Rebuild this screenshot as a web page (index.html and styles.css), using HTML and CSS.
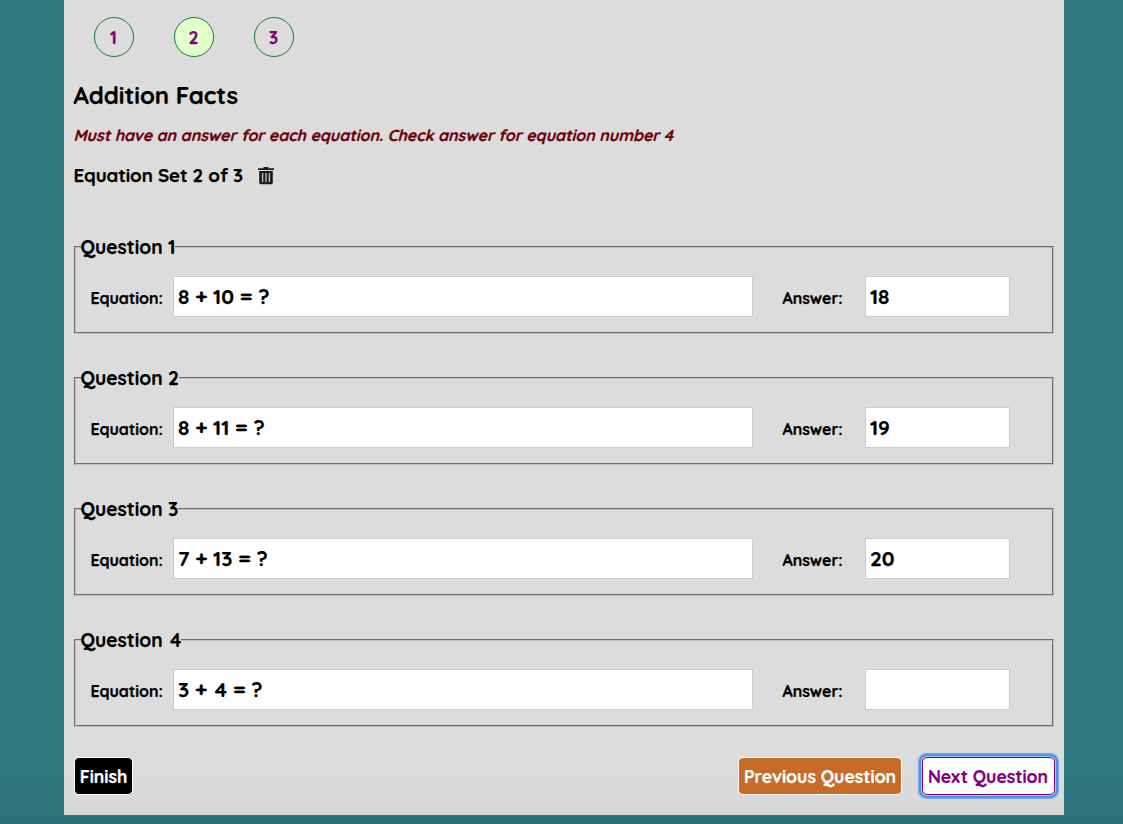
FILE: index.html
```html
<!DOCTYPE html>
<html lang="en">
<head>
<meta charset="utf-8">
<title>Addition Facts</title>
<link rel="stylesheet" href="styles.css">
</head>
<body>
<main class="panel">
  <nav class="steps">
    <span class="step">1</span>
    <span class="step current">2</span>
    <span class="step">3</span>
  </nav>
  <h1 class="title">Addition Facts</h1>
  <p class="error">Must have an answer for each equation. Check answer for equation number 4</p>
  <div class="set-row">
    <h2 class="set-title">Equation Set 2 of 3</h2>
    <svg class="trash" width="16" height="19" viewBox="0 0 16 19">
      <path d="M0 2.2h5l.8-1.2h4.4l.8 1.2h5v1.9H0z" fill="#1b1b1b"/>
      <path d="M1.2 5h13.6v11.5q0 1.7-1.7 1.7H2.9q-1.7 0-1.7-1.7z" fill="#1b1b1b"/>
      <path d="M4.6 7v9M8 7v9M11.4 7v9" stroke="#c8c8c8" stroke-width="1.3" fill="none"/>
    </svg>
  </div>
  <form class="questions">
    <fieldset class="question">
      <legend class="legend">Question 1</legend>
      <div class="fields"><label class="label">Equation:</label><div class="input equation">8 + 10 = ?</div><label class="label answer-label">Answer:</label><div class="input answer">18</div></div>
    </fieldset>
    <fieldset class="question">
      <legend class="legend">Question 2</legend>
      <div class="fields"><label class="label">Equation:</label><div class="input equation">8 + 11 = ?</div><label class="label answer-label">Answer:</label><div class="input answer">19</div></div>
    </fieldset>
    <fieldset class="question">
      <legend class="legend">Question 3</legend>
      <div class="fields"><label class="label">Equation:</label><div class="input equation">7 + 13 = ?</div><label class="label answer-label">Answer:</label><div class="input answer">20</div></div>
    </fieldset>
    <fieldset class="question">
      <legend class="legend">Question <span class="digit">4</span></legend>
      <div class="fields"><label class="label">Equation:</label><div class="input equation">3 + <span class="digit">4</span> = ?</div><label class="label answer-label">Answer:</label><div class="input answer"></div></div>
    </fieldset>
  </form>
  <div class="actions">
    <button class="button finish">Finish</button>
    <button class="button previous">Previous Question</button>
    <button class="button next">Next Question</button>
  </div>
</main>
</body>
</html>
```
FILE: styles.css
```css
* { box-sizing: border-box; }
body {
  margin: 0;
  height: 824px;
  overflow: hidden;
  background: linear-gradient(#2f7880 0, #2f7880 770px, #2c7078 824px);
  font-family: Quicksand, Lato, sans-serif;
  font-weight: 700;
  color: #000;
  -webkit-text-stroke-width: 0.25px;
}
.panel {
  width: 1000px;
  height: 815px;
  margin-left: 64px;
  padding: 17px 7px 0 10px;
  background: linear-gradient(#dcdcdc 0, #dcdcdc 770px, #d7d7d7 815px);
}
.steps { display: flex; gap: 40px; padding-left: 20px; }
.step {
  width: 40px;
  height: 40px;
  padding-right: 1px;
  border: 1px solid #128035;
  border-radius: 50%;
  line-height: 38px;
  text-align: center;
  font-size: 17.6px;
  color: #800080;
}
.current { background: #e2ffcc; }
.title { margin: 23px 0 0 -0.5px; font-size: 24px; line-height: 30px; letter-spacing: -0.04px; white-space: nowrap; }
.error {
  margin: 15px 0 0 -0.5px;
  font-style: italic;
  font-size: 16px;
  line-height: 20px;
  letter-spacing: -0.02px;
  color: #6a0008;
  white-space: nowrap;
}
.set-row { display: flex; align-items: center; height: 24px; margin-top: 18px; margin-left: -0.5px; }
.set-title { width: 184px; margin: 0; font-size: 18.72px; line-height: 24px; letter-spacing: -0.09px; white-space: nowrap; }
.questions { display: flex; flex-direction: column; gap: 31px; margin-top: 47px; }
.question {
  width: 980px;
  height: 100px;
  margin: 0;
  padding: 0 14px;
  border: 2px groove #c0c0c0;
}
.legend { height: 26px; margin-left: -9.5px; padding: 0; font-size: 19.2px; line-height: 26px; }
.digit { margin-left: 2px; }
.fields { display: flex; align-items: center; padding-top: 16px; }
.label { width: 83px; padding: 3px 0 0 0.5px; font-size: 16px; line-height: 20px; letter-spacing: -0.05px; white-space: nowrap; }
.input {
  height: 41px;
  padding-left: 4px;
  border: 1px solid #ccc;
  background: #fff;
  font-size: 20.8px;
  line-height: 39px;
}
.equation { width: 580px; }
.answer-label { margin-left: 29px; }
.answer { width: 145px; }
.actions { display: flex; align-items: center; margin-top: 30px; }
.button {
  height: 38px;
  padding: 0;
  border: 1px solid #fff;
  border-radius: 5px;
  font: inherit;
  font-size: 17.6px;
  text-align: center;
  white-space: nowrap;
  color: #fff;
}
.finish { width: 59px; background: #000; }
.previous { width: 164px; margin-left: 605px; background: #c76b29; }
.next { width: 133px; margin-left: 19.5px; background: #fff; border-color: #800080; color: #800080; box-shadow: 0 0 0 1px #a9c5ea, 0 0 0 3px #4d94e8, 0 0 1px 3.5px #75a9e6; }
```
